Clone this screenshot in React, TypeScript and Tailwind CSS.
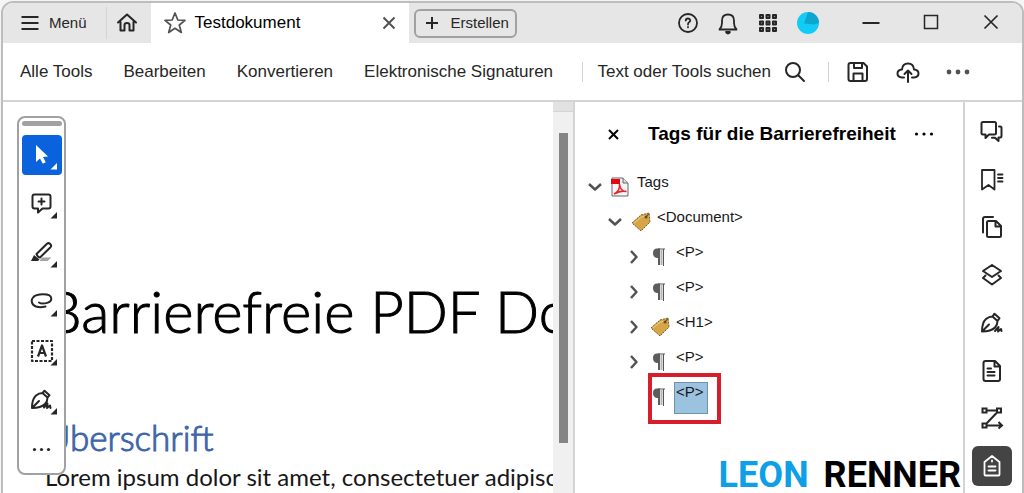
import React, { useState } from 'react';
import clsx from 'clsx';

type IconProps = { className?: string; children: React.ReactNode; box?: number };

function Icon({ className = 'h-6 w-6', children, box = 24 }: IconProps) {
  return (
    <svg
      viewBox={`0 0 ${box} ${box}`}
      className={clsx('shrink-0', className)}
      fill="none"
      stroke="currentColor"
      strokeWidth="2"
      strokeLinecap="round"
      strokeLinejoin="round"
      aria-hidden="true"
    >
      {children}
    </svg>
  );
}

const Corner = () => <path d="M35 28v6.5h-6.5z" fill="currentColor" stroke="none" />;

// Quick tools, drawn on the full 40px button
const quickTools = [
  {
    id: 'Auswählen',
    art: (
      <>
        <path d="M14 10v17l4-3.6 2.8 5.4 2.9-1.5-2.7-5.2 5-.6z" fill="currentColor" stroke="none" />
        <Corner />
      </>
    ),
  },
  {
    id: 'Kommentar',
    art: (
      <>
        <path d="M12.500 10.500h14q2 0 2 2v10q0 2-2 2h-6l-4.500 4v-4h-3.500q-2 0-2-2v-10q0-2 2-2z" />
        <path d="M19.500 14.500v6M16.500 17.500h6" />
        <Corner />
      </>
    ),
  },
  {
    id: 'Hervorheben',
    art: (
      <>
        <path d="M14.500 21 25 10.700q1.500-1.300 3.200.3t.3 3.200L18 24.500q-2 0-3.500-3.500z" />
        <path d="m12 22 5.500 4.500-1.500 1.500H9z" fill="currentColor" stroke="none" />
        <path d="M20 24.500h9.500l-4 3.500h-8z" fill="#a3a3a3" stroke="none" />
        <Corner />
      </>
    ),
  },
  {
    id: 'Zeichnen',
    art: (
      <>
        <path d="M11 15.500C14 11.500 29 10.500 29.300 16.500 29.500 21.500 20 22.500 17 20.500M13 14C8 17 9 22.500 14 24.500q4.500 1.500 9.500 0" />
        <Corner />
      </>
    ),
  },
  {
    id: 'Text hinzufügen',
    art: (
      <>
        <rect x="10" y="10" width="20" height="20" strokeWidth="2.200" strokeDasharray="3 1.500" strokeLinecap="butt" />
        <path d="M16 25.500 20 14.500l4 11M17.500 22h5" strokeWidth="2.200" strokeLinecap="butt" />
        <Corner />
      </>
    ),
  },
  {
    id: 'Signieren',
    art: (
      <>
        <path d="M10 28q0-9 4-12.500 3-2.500 6.500-2.500l5 4.500q0 4-2.500 6.500-4 4-13 4zM10 28l7-7M20.500 13l2-2.300 5 4.500-2 2.300M22 27.500l3.500-4-.5 4.500 3-2.500.5 2.500" />
        <Corner />
      </>
    ),
  },
  {
    id: 'Weitere Werkzeuge',
    art: (
      <g fill="currentColor" stroke="none">
        <circle cx="12.500" cy="20.500" r="1.600" />
        <circle cx="19.500" cy="20.500" r="1.600" />
        <circle cx="26.500" cy="20.500" r="1.600" />
      </g>
    ),
  },
];

const sidePanels = [
  {
    id: 'Kommentare',
    art: (
      <>
        <path d="M3 2h11.500q1.500 0 1.500 1.500V13q0 1.500-1.500 1.500H9L5.500 18v-3.500H3q-1.500 0-1.500-1.500V3.500Q1.500 2 3 2z" />
        <path d="M19 6.500h1q1.500 0 1.500 1.500v8q0 1.500-1.500 1.500h-1.500V21L15 17.800H12" />
      </>
    ),
  },
  {
    id: 'Lesezeichen',
    art: <path d="M2 2h12.500v19.500L8.500 17 2 21.500zM18 6.500h4.500M18 10h4.500M18 13.500h4.500" strokeWidth="1.800" />,
  },
  {
    id: 'Seitenminiaturen',
    art: (
      <>
        <path d="M8.500 6H16l5 5v9.500q0 1.500-1.500 1.500h-11Q7 22 7 20.500v-13Q7 6 8.500 6zM15.500 6v5.500H21" />
        <path d="M3 17.500V4Q3 2 5 2h8" />
      </>
    ),
  },
  {
    id: 'Ebenen',
    art: <path d="m12 2 9 6-9 6-9-6zM5.500 12.500 3 15l9 6.500 9-6.500-2.500-2.500" />,
  },
  {
    id: 'Signaturen',
    art: <path d="M2 20.500q0-9 4-12.500 3-2.500 6.500-2.500l5 4.500q0 4-2.500 6.500-4 4-13 4zM2 20.500l7-7M12.500 5.500l2-2.800 5 4.500-2 2.800M15 20l3.500-4-.5 4.500 3-2.500.5 2" />,
  },
  {
    id: 'Inhalt',
    art: <path d="M5.500 2H15l5 5v13q0 2-2 2H5.500q-2 0-2-2V4q0-2 2-2zM14.500 2v5.500H20M7.500 9.500H11M7.500 13h7M7.500 16.500h7" />,
  },
  {
    id: 'Reihenfolge',
    art: (
      <path
        d="M2.500 2.500h4v4h-4zM17 2.500h4v4h-4zM2.500 17.500h4v4h-4zM6.500 4.500H17M17 6.500l-10.500 11M6.500 19.500H22M18.500 16l3.500 3.500-3.500 3"
        strokeLinecap="butt"
        strokeLinejoin="miter"
      />
    ),
  },
  {
    id: 'Tags',
    art: <path d="M4.500 8 12 2l7.500 6v12.500q0 1-1 1h-13q-1 0-1-1zM12 6.500v1M8.500 12.500h7M8.500 16.500h7" strokeWidth="1.800" />,
  },
];

function PdfIcon() {
  return (
    <svg viewBox="0 0 18 20" className="h-5 w-[18px] shrink-0" aria-hidden="true">
      <path d="M1 1h11l5 5v13H1z" fill="#f5f5f5" stroke="#666" />
      <path d="M12 1v5h5" fill="#ddd" stroke="#666" />
      <path d="M0 2h9v5H0z" fill="#e30613" />
      <path d="M3 17c3-1.500 6-5 5.500-10 .5 5 3 7.500 7 7.500-4-1-9 .5-12.500 2.500z" fill="none" stroke="#e8222c" strokeWidth="1.500" />
    </svg>
  );
}

function TagIcon() {
  return (
    <svg viewBox="0 0 20 20" className="h-5 w-5 shrink-0" aria-hidden="true">
      <path d="M1 11 10 3l8-2 1 9-9 9z" fill="#d5a548" stroke="#7a5a20" strokeDasharray="2 1" />
      <path d="m3 11 7.500-6L15 4" fill="none" stroke="#efcf85" />
      <circle cx="15" cy="5" r="1.600" fill="#6b5327" />
      <path d="m15 5 3-3.500" stroke="#4b3b1d" />
    </svg>
  );
}

function ParagraphIcon() {
  return (
    <svg viewBox="0 0 20 20" className="h-5 w-5 shrink-0" aria-hidden="true">
      <path d="M10 1.500H7Q3 1.500 3 6t4 5h1V18h2z" fill="#5c5c5c" />
      <path d="M8 2h7M13.500 2v17" stroke="#555" />
      <path d="M11.500 3v15" stroke="#b5b5b5" strokeWidth="2" />
    </svg>
  );
}

type Node = { label: string; icon: 'pdf' | 'tag' | 'para'; pad: string; state: 'open' | 'closed' | 'leaf' };

const nodes: Node[] = [
  { label: 'Tags', icon: 'pdf', pad: 'pl-3', state: 'open' },
  { label: '<Document>', icon: 'tag', pad: 'pl-8', state: 'open' },
  { label: '<P>', icon: 'para', pad: 'pl-[51px]', state: 'closed' },
  { label: '<P>', icon: 'para', pad: 'pl-[51px]', state: 'closed' },
  { label: '<H1>', icon: 'tag', pad: 'pl-[51px]', state: 'closed' },
  { label: '<P>', icon: 'para', pad: 'pl-[51px]', state: 'closed' },
  { label: '<P>', icon: 'para', pad: 'pl-[51px]', state: 'leaf' },
];

function TagTree() {
  const [selected, setSelected] = useState(6);

  return (
    <ul className="mt-[23px] text-[15px] leading-5 text-neutral-900">
      {nodes.map((node, i) => (
        <li key={i} className={clsx('relative flex h-[35px] items-start', node.pad)}>
          <span className="flex h-[35px] w-6 shrink-0 items-center text-neutral-600">
            {node.state !== 'leaf' && (
              <Icon className="h-4 w-4" box={16}>
                <path d={node.state === 'open' ? 'm2 5 6 5.500 6-5.500' : 'm5 2 5.500 6-5.500 6'} strokeWidth="2.500" strokeLinecap="butt" />
              </Icon>
            )}
          </span>
          <span className="flex h-[35px] w-5 shrink-0 items-center">
            {node.icon === 'pdf' && <PdfIcon />}
            {node.icon === 'tag' && <TagIcon />}
            {node.icon === 'para' && <ParagraphIcon />}
          </span>
          <button
            type="button"
            onClick={() => setSelected(i)}
            className={clsx(
              'ml-1 mt-[3px] h-8 border px-px text-left leading-4',
              selected === i ? 'w-[34px] border-[#6e93ad] bg-[#9bc2de]' : 'border-transparent'
            )}
          >
            <span className="block h-7">{node.label}</span>
          </button>
          {node.state === 'leaf' && (
            <span className="pointer-events-none absolute -top-1.5 left-[73px] h-[51px] w-[73px] border-4 border-[#d71f2b]" />
          )}
        </li>
      ))}
    </ul>
  );
}

function TitleBar() {
  return (
    <header className="flex h-10 shrink-0 items-center bg-[#e6e6e6] text-[15px] text-neutral-800">
      <button type="button" className="flex items-center gap-[7px] pl-[15px]">
        <Icon>
          <path d="M3.500 6h17M3.500 12h17M3.500 18h17" strokeLinecap="butt" />
        </Icon>
        Menü
      </button>
      <div className="ml-[19px] h-8 w-px bg-neutral-300" />
      <button type="button" aria-label="Start" className="ml-2 mr-3">
        <Icon>
          <path d="m3 11.500 9-8 9 8M5.500 11v8.500h4V14q0-2 2.500-2t2.500 2v5.500h4V11" />
        </Icon>
      </button>
      <div className="flex h-full w-[258px] items-center bg-white pl-3 pr-2 text-[17px] text-black">
        <Icon className="h-6 w-6 text-neutral-600">
          <path d="m12 2 2.800 7 7.200.4-5.700 4.600 2 7.500-6.300-4.200-6.300 4.200 2-7.500L2 9.400 9.200 9z" strokeWidth="1.700" />
        </Icon>
        <span className="ml-2">Testdokument</span>
        <button type="button" aria-label="Tab schließen" className="ml-auto text-neutral-600">
          <Icon>
            <path d="m6.500 6.500 11 11M17.500 6.500l-11 11" strokeLinecap="butt" />
          </Icon>
        </button>
      </div>
      <button type="button" className="ml-[5px] flex h-[29px] w-[103px] items-center gap-[7px] rounded-md border-2 border-neutral-400 pl-1">
        <Icon className="h-6 w-6">
          <path d="M12 6v12M6 12h12" strokeLinecap="butt" />
        </Icon>
        Erstellen
      </button>

      <div className="ml-auto flex items-center gap-4">
        <button type="button" aria-label="Hilfe">
          <Icon>
            <circle cx="12" cy="12" r="9" strokeWidth="1.800" />
            <path d="M9.700 9.500q.3-2 2.300-2t2.300 1.800q0 1.200-1.200 1.900T12 13.500M12 16v.3" strokeWidth="1.800" />
          </Icon>
        </button>
        <button type="button" aria-label="Benachrichtigungen">
          <Icon>
            <path d="M3.500 18.500h17q-2.500-2.500-2.500-6.500V9.500Q18 3.500 12 3.500T6 9.500V12q0 4-2.500 6.500zM10 21q.5 1.500 2 1.500t2-1.500z" strokeWidth="1.800" />
          </Icon>
        </button>
        <button type="button" aria-label="Apps">
          <Icon>
            <path d="M4 4h3v3H4zM10.500 4h3v3h-3zM17 4h3v3h-3zM4 10.500h3v3H4zM10.500 10.500h3v3h-3zM17 10.500h3v3h-3zM4 17h3v3H4zM10.500 17h3v3h-3zM17 17h3v3h-3z" fill="#999" />
          </Icon>
        </button>
        <button type="button" aria-label="Konto">
          <Icon>
            <circle cx="12" cy="12" r="11" fill="#12ccf7" stroke="none" />
            <path d="M12 1a11 11 0 0 1 11 11l-5 1.500-10-1z" fill="#10a5cf" stroke="none" />
          </Icon>
        </button>
      </div>
      <div className="ml-[39px] mr-[19px] flex items-center gap-9">
        <button type="button" aria-label="Minimieren">
          <Icon>
            <path d="M3.500 12h17" strokeLinecap="butt" />
          </Icon>
        </button>
        <button type="button" aria-label="Maximieren">
          <Icon>
            <path d="M5.500 4.500h13v13h-13z" strokeWidth="1.500" strokeLinejoin="miter" />
          </Icon>
        </button>
        <button type="button" aria-label="Schließen">
          <Icon>
            <path d="m5.500 4.500 13 13M18.500 4.500l-13 13" strokeWidth="1.700" strokeLinecap="butt" />
          </Icon>
        </button>
      </div>
    </header>
  );
}

function MenuBar() {
  return (
    <div className="flex h-[59px] shrink-0 items-center border-b-2 border-neutral-300 pl-[17px] pr-[52px] text-[17px] text-neutral-800">
      <nav className="flex gap-[31px] whitespace-nowrap">
        <a href="#tools">Alle Tools</a>
        <a href="#edit">Bearbeiten</a>
        <a href="#convert">Konvertieren</a>
        <a href="#sign">Elektronische Signaturen</a>
      </nav>
      <div className="ml-auto flex items-center">
        <div className="mr-3.5 h-5 w-px bg-neutral-300" />
        <button type="button" className="flex items-center gap-3 whitespace-nowrap">
          Text oder Tools suchen
          <Icon>
            <circle cx="10" cy="10" r="7" />
            <path d="m15.500 15.500 5.500 5.500" />
          </Icon>
        </button>
        <div className="ml-[21px] mr-[17px] h-5 w-px bg-neutral-300" />
        <div className="flex items-center gap-[26px]">
          <button type="button" aria-label="Speichern">
            <Icon>
              <path d="M4.500 3h13l3.500 3.500V19q0 2-2 2H4.500q-2 0-2-2V5q0-2 2-2zM8 3v5h8V3M7.500 21v-7.500h9V21" />
            </Icon>
          </button>
          <button type="button" aria-label="Hochladen">
            <Icon>
              <path d="M8 17.500H6Q1.500 17 1.500 13.500T6 9.500Q6.500 3.500 12 3.500t6 6q4.500.5 4.500 4T18 17.500h-2M12 22V10.500M8.500 14l3.500-3.500 3.500 3.500" />
            </Icon>
          </button>
          <button type="button" aria-label="Mehr" className="text-neutral-600">
            <Icon>
              <g fill="currentColor" stroke="none">
                <circle cx="3" cy="12" r="2.400" />
                <circle cx="12" cy="12" r="2.400" />
                <circle cx="21" cy="12" r="2.400" />
              </g>
            </Icon>
          </button>
        </div>
      </div>
    </div>
  );
}

export default function App() {
  const [tool, setTool] = useState('Auswählen');
  const [panel, setPanel] = useState('Tags');

  return (
    <div className="h-screen overflow-hidden bg-neutral-100 pl-px pt-px font-['Liberation_Sans',Arial,sans-serif]">
      <div className="flex h-full flex-col overflow-hidden rounded-t-xl border-2 border-b-0 border-[#bdbdbd] bg-white">
        <TitleBar />
        <MenuBar />

        <div className="flex min-h-0 flex-1">
          <main className="relative min-w-0 flex-1 overflow-hidden whitespace-nowrap pl-[42px] font-['Lato',sans-serif]">
            <h1 className="mt-[169px] text-[58px] font-light leading-[80px] text-black [-webkit-text-stroke:1px]">
              Barrierefreie PDF Do
            </h1>
            <h2 className="mt-[62px] text-[35px] font-light leading-[48px] text-[#3f66a8] [-webkit-text-stroke:1px]">Überschrift</h2>
            <p className="text-[24px] leading-8 text-neutral-900">Lorem ipsum dolor sit amet, consectetuer adipisc</p>

            <div className="absolute left-3.5 top-3.5 flex w-[49px] flex-col items-center gap-[9px] rounded-lg border-2 border-neutral-400 bg-white pb-1 pt-[3px]">
              <div className="h-[5px] w-10 rounded-full bg-neutral-400" />
              {quickTools.map((t) => (
                <button
                  key={t.id}
                  type="button"
                  title={t.id}
                  onClick={() => setTool(t.id)}
                  className={clsx('h-10 w-10 rounded', tool === t.id ? 'bg-[#0a62dc] text-white' : 'text-neutral-800')}
                >
                  <Icon className="h-10 w-10" box={40}>
                    {t.art}
                  </Icon>
                </button>
              ))}
            </div>
          </main>

          <div className="flex w-[22px] shrink-0 flex-col items-center border-r-2 border-neutral-300 bg-[#f0f0f0]">
            <div className="h-2.5 w-full border-b border-neutral-300 bg-[#e2e2e2]" />
            <div className="mt-[21px] h-[310px] w-[9px] bg-[#858585]" />
          </div>

          <aside className="flex w-[388px] shrink-0 flex-col">
            <div className="flex items-center pl-[26px] pt-5">
              <button type="button" aria-label="Bereich schließen">
                <Icon>
                  <path d="m8 8 9 9M17 8l-9 9" strokeLinecap="butt" />
                </Icon>
              </button>
              <h2 className="ml-[23px] w-[254px] overflow-hidden whitespace-nowrap text-[19px] font-bold leading-6 text-black">
                Tags für die Barrierefreiheit
              </h2>
              <button type="button" aria-label="Optionen" className="ml-2.5">
                <Icon>
                  <g fill="currentColor" stroke="none">
                    <circle cx="4.500" cy="12" r="1.600" />
                    <circle cx="12" cy="12" r="1.600" />
                    <circle cx="19.500" cy="12" r="1.600" />
                  </g>
                </Icon>
              </button>
            </div>
            <TagTree />
            <p className="mt-auto flex justify-end gap-[15px] pr-0.5 font-['Roboto',sans-serif] text-[36px] font-bold leading-9 text-black">
              <span className="text-[#0f9fe6]">LEON</span>
              <span>RENNER</span>
            </p>
          </aside>

          <nav className="flex w-[59px] shrink-0 flex-col border-l-2 border-neutral-300">
            <div className="flex h-full max-h-[391px] flex-col items-center justify-between pb-[7px] pl-0 pr-1 pt-2.5">
              {sidePanels.map((p) => (
                <button
                  key={p.id}
                  type="button"
                  title={p.id}
                  onClick={() => setPanel(p.id)}
                  className={clsx(
                    'flex h-10 w-10 items-center justify-center rounded-md',
                    panel === p.id ? 'bg-[#444] text-white' : 'text-neutral-800'
                  )}
                >
                  <Icon>{p.art}</Icon>
                </button>
              ))}
            </div>
          </nav>
        </div>
      </div>
    </div>
  );
}
